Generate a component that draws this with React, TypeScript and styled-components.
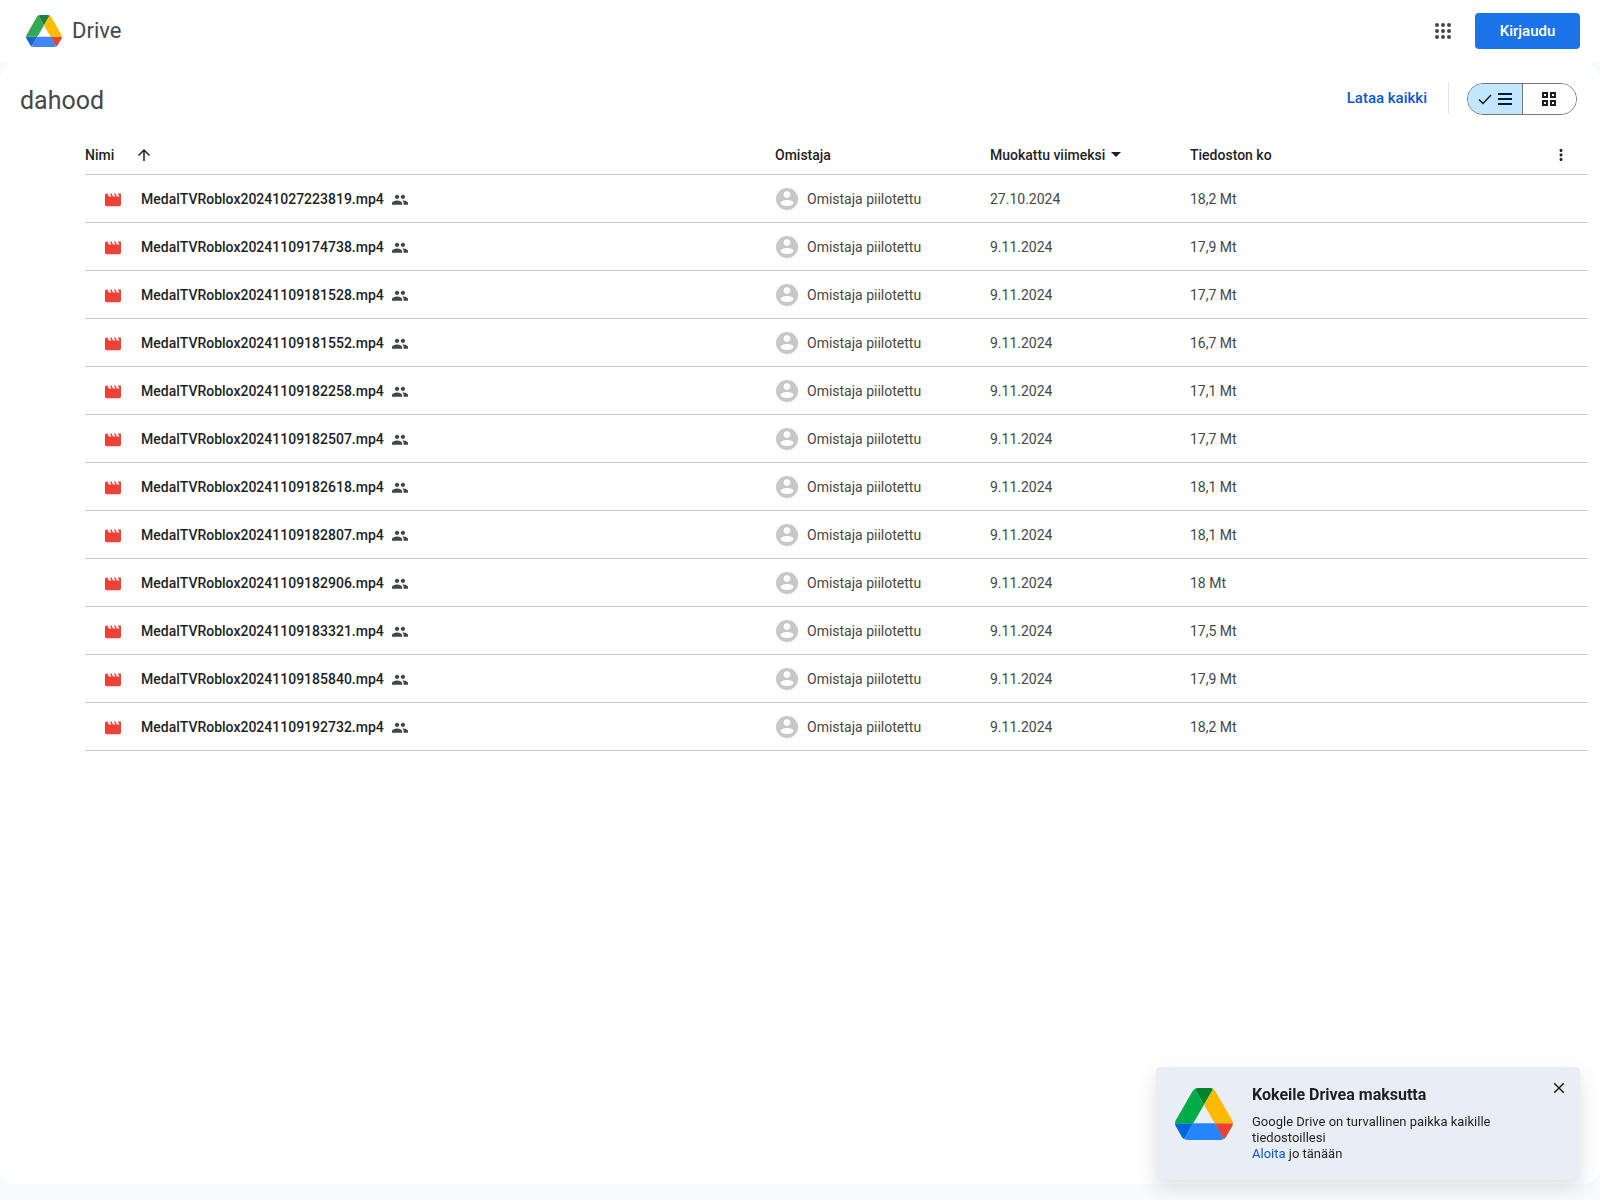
import React from "react";
import styled, { createGlobalStyle } from "styled-components";

const Global = createGlobalStyle`
  *, *::before, *::after { box-sizing: border-box; }
  body {
    margin: 0;
    background: #f8fafd;
    color: #1f1f1f;
    font-family: Roboto, "Liberation Sans", sans-serif;
    font-size: 14px;
    line-height: 20px;
  }
  button { font-family: inherit; cursor: pointer; }
`;

const Page = styled.div`
  display: flex;
  flex-direction: column;
  min-height: 100vh;
  padding-bottom: 16px;
`;

const TopBar = styled.header`
  display: flex;
  align-items: center;
  justify-content: space-between;
  height: 63px;
  padding: 0 20px 2px 26px;
  background: #fff;
`;

const Brand = styled.a`
  display: flex;
  align-items: center;
  gap: 10px;
  color: #444746;
  font-size: 22px;
  line-height: 28px;
  text-decoration: none;
`;

const TopActions = styled.div`
  display: flex;
  align-items: center;
  gap: 12px;
`;

const IconButton = styled.button<{ $size: number; $color?: string }>`
  display: inline-flex;
  align-items: center;
  justify-content: center;
  width: ${(p) => p.$size}px;
  height: ${(p) => p.$size}px;
  padding: 0;
  border: 0;
  border-radius: 50%;
  background: transparent;
  color: ${(p) => p.$color ?? "#1f1f1f"};
`;

const SignIn = styled.button`
  min-width: 105px;
  height: 36px;
  padding: 0 16px;
  border: 0;
  border-radius: 4px;
  background: #1a73e8;
  color: #fff;
  font-size: 15px;
  font-weight: 500;
`;

const Sheet = styled.main`
  flex: 1;
  border-radius: 16px;
  background: #fff;
`;

const Toolbar = styled.div`
  display: flex;
  align-items: center;
  justify-content: space-between;
  height: 72px;
  padding: 0 23px 0 20px;
`;

const Title = styled.h1`
  margin: 0;
  padding-top: 4px;
  color: #444746;
  font-size: 25px;
  font-weight: 400;
  line-height: 32px;
`;

const ToolbarActions = styled.div`
  display: flex;
  align-items: center;
`;

const DownloadAll = styled.button`
  height: 32px;
  padding: 0 21px 2px;
  border: 0;
  background: transparent;
  color: #0b57d0;
  font-size: 15px;
  font-weight: 500;
`;

const Divider = styled.span`
  width: 1px;
  height: 32px;
  margin-bottom: 2px;
  background: #dfe3e8;
`;

const ViewToggle = styled.div`
  display: flex;
  width: 110px;
  height: 32px;
  margin-left: 18px;
  border: 1px solid #747775;
  border-radius: 16px;
  overflow: hidden;
`;

const ToggleButton = styled.button<{ $active?: boolean }>`
  display: flex;
  flex: 1;
  align-items: center;
  justify-content: center;
  gap: 6px;
  padding: 0;
  border: 0;
  background: ${(p) => (p.$active ? "#c2e7ff" : "#fff")};
  color: ${(p) => (p.$active ? "#001d35" : "#1f1f1f")};

  & + & { border-left: 1px solid #747775; }
`;

const TableArea = styled.div`
  padding: 0 12px 0 85px;
`;

const FileTable = styled.table`
  width: 100%;
  border-collapse: separate;
  border-spacing: 0;
  table-layout: fixed;
`;

const Column = styled.col<{ $width?: number }>`
  width: ${(p) => (p.$width ? `${p.$width}px` : "auto")};
`;

const HeadCell = styled.th`
  height: 40px;
  padding: 0;
  border-bottom: 1px solid #c7c7c7;
  font-weight: 500;
  text-align: left;
`;

const HeadContent = styled.div<{ $gap?: number; $end?: boolean }>`
  display: flex;
  align-items: center;
  justify-content: ${(p) => (p.$end ? "flex-end" : "flex-start")};
  gap: ${(p) => p.$gap ?? 0}px;
  padding-right: ${(p) => (p.$end ? 15 : 0)}px;
`;

const Clipped = styled.div`
  width: 82px;
  overflow: hidden;
  white-space: nowrap;
`;

const Cell = styled.td`
  height: 48px;
  padding: 0;
  border-bottom: 1px solid #c7c7c7;
  color: #444746;
`;

const FileName = styled.div`
  display: flex;
  align-items: center;
  gap: 8px;
  padding-left: 20px;
  color: #1f1f1f;
  font-weight: 500;

  & > svg:first-child { margin-right: 12px; }
`;

const Owner = styled.div`
  display: flex;
  align-items: center;
  gap: 9px;
  padding-left: 1px;
`;

const Promo = styled.aside`
  position: fixed;
  right: 20px;
  bottom: 20px;
  display: flex;
  gap: 19px;
  width: 424px;
  padding: 12px 12px 18px 19px;
  border-radius: 4px;
  background: #e9eef6;
  box-shadow: 0 8px 20px rgba(60, 64, 67, 0.16);
  font-size: 13px;
  line-height: 16px;

  & > svg { flex: none; margin-top: 9px; }
`;

const PromoText = styled.div`
  flex: 1;
  padding-top: 5px;
`;

const PromoTitle = styled.h2`
  margin: 0 0 8px;
  font-size: 16px;
  font-weight: 700;
  line-height: 22px;
`;

const PromoBody = styled.p`
  margin: 0;
  max-width: 260px;
`;

const PromoLink = styled.a`
  color: #0b57d0;
  text-decoration: none;
`;

const brandColors = ["#1967d2", "#34a853", "#ea4335", "#188038", "#4285f4", "#fbbc04"];
const promoColors = ["#0066da", "#00ac47", "#ea4335", "#00832d", "#2684fc", "#ffba00"];

function DriveLogo({ width, height, colors }: { width: number; height: number; colors: string[] }) {
  return (
    <svg width={width} height={height} viewBox="0 0 87.3 78" aria-hidden="true">
      <path fill={colors[0]} d="m6.6 66.85 3.85 6.65c.8 1.4 1.95 2.5 3.3 3.3l13.75-23.8h-27.5c0 1.55.4 3.1 1.2 4.5z" />
      <path fill={colors[1]} d="m43.65 25-13.75-23.8c-1.35.8-2.5 1.9-3.3 3.3l-25.4 44a9.06 9.06 0 0 0-1.2 4.5h27.5z" />
      <path fill={colors[2]} d="m73.55 76.8c1.35-.8 2.5-1.9 3.3-3.3l1.6-2.75 7.65-13.25c.8-1.4 1.2-2.95 1.2-4.5h-27.502l5.852 11.5z" />
      <path fill={colors[3]} d="m43.65 25 13.75-23.8c-1.35-.8-2.9-1.2-4.5-1.2h-18.5c-1.6 0-3.15.45-4.5 1.2z" />
      <path fill={colors[4]} d="m59.8 53h-32.3l-13.75 23.8c1.35.8 2.9 1.2 4.5 1.2h50.8c1.6 0 3.15-.45 4.5-1.2z" />
      <path fill={colors[5]} d="m73.4 26.5-12.7-22c-.8-1.4-1.95-2.5-3.3-3.3l-13.75 23.8 16.15 28h27.45c0-1.55-.4-3.1-1.2-4.5z" />
    </svg>
  );
}

function Icon({ size = 24, width, box = "0 0 24 24", color = "currentColor", d }: {
  size?: number; width?: number; box?: string; color?: string; d: string;
}) {
  return (
    <svg width={width ?? size} height={size} viewBox={box} fill={color} fillRule="evenodd" aria-hidden="true">
      <path d={d} />
    </svg>
  );
}

const paths = {
  apps: "M6 8a2 2 0 1 0 0-4 2 2 0 0 0 0 4zm6 0a2 2 0 1 0 0-4 2 2 0 0 0 0 4zm6 0a2 2 0 1 0 0-4 2 2 0 0 0 0 4zM6 14a2 2 0 1 0 0-4 2 2 0 0 0 0 4zm6 0a2 2 0 1 0 0-4 2 2 0 0 0 0 4zm6 0a2 2 0 1 0 0-4 2 2 0 0 0 0 4zM6 20a2 2 0 1 0 0-4 2 2 0 0 0 0 4zm6 0a2 2 0 1 0 0-4 2 2 0 0 0 0 4zm6 0a2 2 0 1 0 0-4 2 2 0 0 0 0 4z",
  list: "M0 0h14v2H0zM0 5h14v2H0zM0 10h14v2H0z",
  grid: "M0 0h6v6H0zM2 2v2h2V2zM8 0h6v6H8zM10 2v2h2V2zM0 8h6v6H0zM2 10v2h2v-2zM8 8h6v6H8zM10 10v2h2v-2z",
  arrowUp: "M4 12l1.41 1.41L11 7.83V20h2V7.83l5.58 5.59L20 12l-8-8-8 8z",
  caret: "M0 0h10L5 5z",
  more: "M12 8c1.1 0 2-.9 2-2s-.9-2-2-2-2 .9-2 2 .9 2 2 2zm0 2c-1.1 0-2 .9-2 2s.9 2 2 2 2-.9 2-2-.9-2-2-2zm0 6c-1.1 0-2 .9-2 2s.9 2 2 2 2-.9 2-2-.9-2-2-2z",
  movie: "M18 4l2 4h-3l-2-4h-2l2 4h-3l-2-4H8l2 4H7L5 4H4c-1.1 0-1.99.9-1.99 2L2 18c0 1.1.9 2 2 2h16c1.1 0 2-.9 2-2V4h-4z",
  group: "M16 11c1.66 0 2.99-1.34 2.99-3S17.66 5 16 5s-3 1.34-3 3 1.34 3 3 3zm-8 0c1.66 0 2.99-1.34 2.99-3S9.66 5 8 5 5 6.34 5 8s1.34 3 3 3zm0 2c-2.33 0-7 1.17-7 3.5V19h14v-2.5c0-2.33-4.67-3.5-7-3.5zm8 0c-.29 0-.62.02-.97.05 1.16.84 1.97 1.97 1.97 3.45V19h6v-2.5c0-2.33-4.67-3.5-7-3.5z",
  close: "M19 6.41 17.59 5 12 10.59 6.41 5 5 6.41 10.59 12 5 17.59 6.41 19 12 13.41 17.59 19 19 17.59 13.41 12z",
};

function Check() {
  return (
    <svg width="14" height="12" viewBox="0 0 14 12" fill="none" stroke="currentColor" strokeWidth="1.5" aria-hidden="true">
      <path d="M1 6.500l4 4L13 2" />
    </svg>
  );
}

function Avatar() {
  return (
    <svg width="22" height="22" viewBox="0 0 22 22" aria-hidden="true">
      <circle cx="11" cy="11" r="11" fill="#c7c7c7" />
      <circle cx="11" cy="6.6" r="3.3" fill="#fff" />
      <path fill="#fff" d="M4.4 15.2c0-2.200 4.400-3.300 6.600-3.300s6.600 1.100 6.600 3.300c-1.400 1.900-3.900 3-6.600 3s-5.200-1.100-6.600-3z" />
    </svg>
  );
}

const files = [
  { stamp: "20241027223819", date: "27.10.2024", size: "18,2 Mt" },
  { stamp: "20241109174738", date: "9.11.2024", size: "17,9 Mt" },
  { stamp: "20241109181528", date: "9.11.2024", size: "17,7 Mt" },
  { stamp: "20241109181552", date: "9.11.2024", size: "16,7 Mt" },
  { stamp: "20241109182258", date: "9.11.2024", size: "17,1 Mt" },
  { stamp: "20241109182507", date: "9.11.2024", size: "17,7 Mt" },
  { stamp: "20241109182618", date: "9.11.2024", size: "18,1 Mt" },
  { stamp: "20241109182807", date: "9.11.2024", size: "18,1 Mt" },
  { stamp: "20241109182906", date: "9.11.2024", size: "18 Mt" },
  { stamp: "20241109183321", date: "9.11.2024", size: "17,5 Mt" },
  { stamp: "20241109185840", date: "9.11.2024", size: "17,9 Mt" },
  { stamp: "20241109192732", date: "9.11.2024", size: "18,2 Mt" },
];

export default function App() {
  return (
    <>
      <Global />
      <Page>
        <TopBar>
          <Brand href="#">
            <DriveLogo width={36} height={34} colors={brandColors} />
            Drive
          </Brand>
          <TopActions>
            <IconButton $size={40} $color="#444746" type="button">
              <Icon d={paths.apps} />
            </IconButton>
            <SignIn type="button">Kirjaudu</SignIn>
          </TopActions>
        </TopBar>
        <Sheet>
          <Toolbar>
            <Title>dahood</Title>
            <ToolbarActions>
              <DownloadAll type="button">Lataa kaikki</DownloadAll>
              <Divider />
              <ViewToggle>
                <ToggleButton $active type="button">
                  <Check />
                  <Icon size={12} width={14} box="0 0 14 12" d={paths.list} />
                </ToggleButton>
                <ToggleButton type="button">
                  <Icon size={14} box="0 0 14 14" d={paths.grid} />
                </ToggleButton>
              </ViewToggle>
            </ToolbarActions>
          </Toolbar>
          <TableArea>
            <FileTable>
              <colgroup>
                <Column />
                <Column $width={215} />
                <Column $width={200} />
                <Column $width={300} />
                <Column $width={98} />
              </colgroup>
              <thead>
                <tr>
                  <HeadCell scope="col">
                    <HeadContent $gap={21}>
                      Nimi
                      <Icon size={18} d={paths.arrowUp} />
                    </HeadContent>
                  </HeadCell>
                  <HeadCell scope="col">Omistaja</HeadCell>
                  <HeadCell scope="col">
                    <HeadContent $gap={6}>
                      Muokattu viimeksi
                      <Icon size={5} width={10} box="0 0 10 5" d={paths.caret} />
                    </HeadContent>
                  </HeadCell>
                  <HeadCell scope="col">
                    <Clipped>Tiedoston koko</Clipped>
                  </HeadCell>
                  <HeadCell>
                    <HeadContent $end>
                      <IconButton $size={24} type="button">
                        <Icon size={18} d={paths.more} />
                      </IconButton>
                    </HeadContent>
                  </HeadCell>
                </tr>
              </thead>
              <tbody>
                {files.map((file) => (
                  <tr key={file.stamp}>
                    <Cell>
                      <FileName>
                        <Icon size={16} box="2 1 20 20" color="#ea4335" d={paths.movie} />
                        {`MedalTVRoblox${file.stamp}.mp4`}
                        <Icon size={16} box="1 0 22 22" color="#444746" d={paths.group} />
                      </FileName>
                    </Cell>
                    <Cell>
                      <Owner>
                        <Avatar />
                        Omistaja piilotettu
                      </Owner>
                    </Cell>
                    <Cell>{file.date}</Cell>
                    <Cell>{file.size}</Cell>
                    <Cell />
                  </tr>
                ))}
              </tbody>
            </FileTable>
          </TableArea>
        </Sheet>
      </Page>
      <Promo>
        <DriveLogo width={58} height={52} colors={promoColors} />
        <PromoText>
          <PromoTitle>Kokeile Drivea maksutta</PromoTitle>
          <PromoBody>
            Google Drive on turvallinen paikka kaikille tiedostoillesi
            <br />
            <PromoLink href="#">Aloita</PromoLink> jo tänään
          </PromoBody>
        </PromoText>
        <IconButton $size={18} type="button">
          <Icon size={18} d={paths.close} />
        </IconButton>
      </Promo>
    </>
  );
}
